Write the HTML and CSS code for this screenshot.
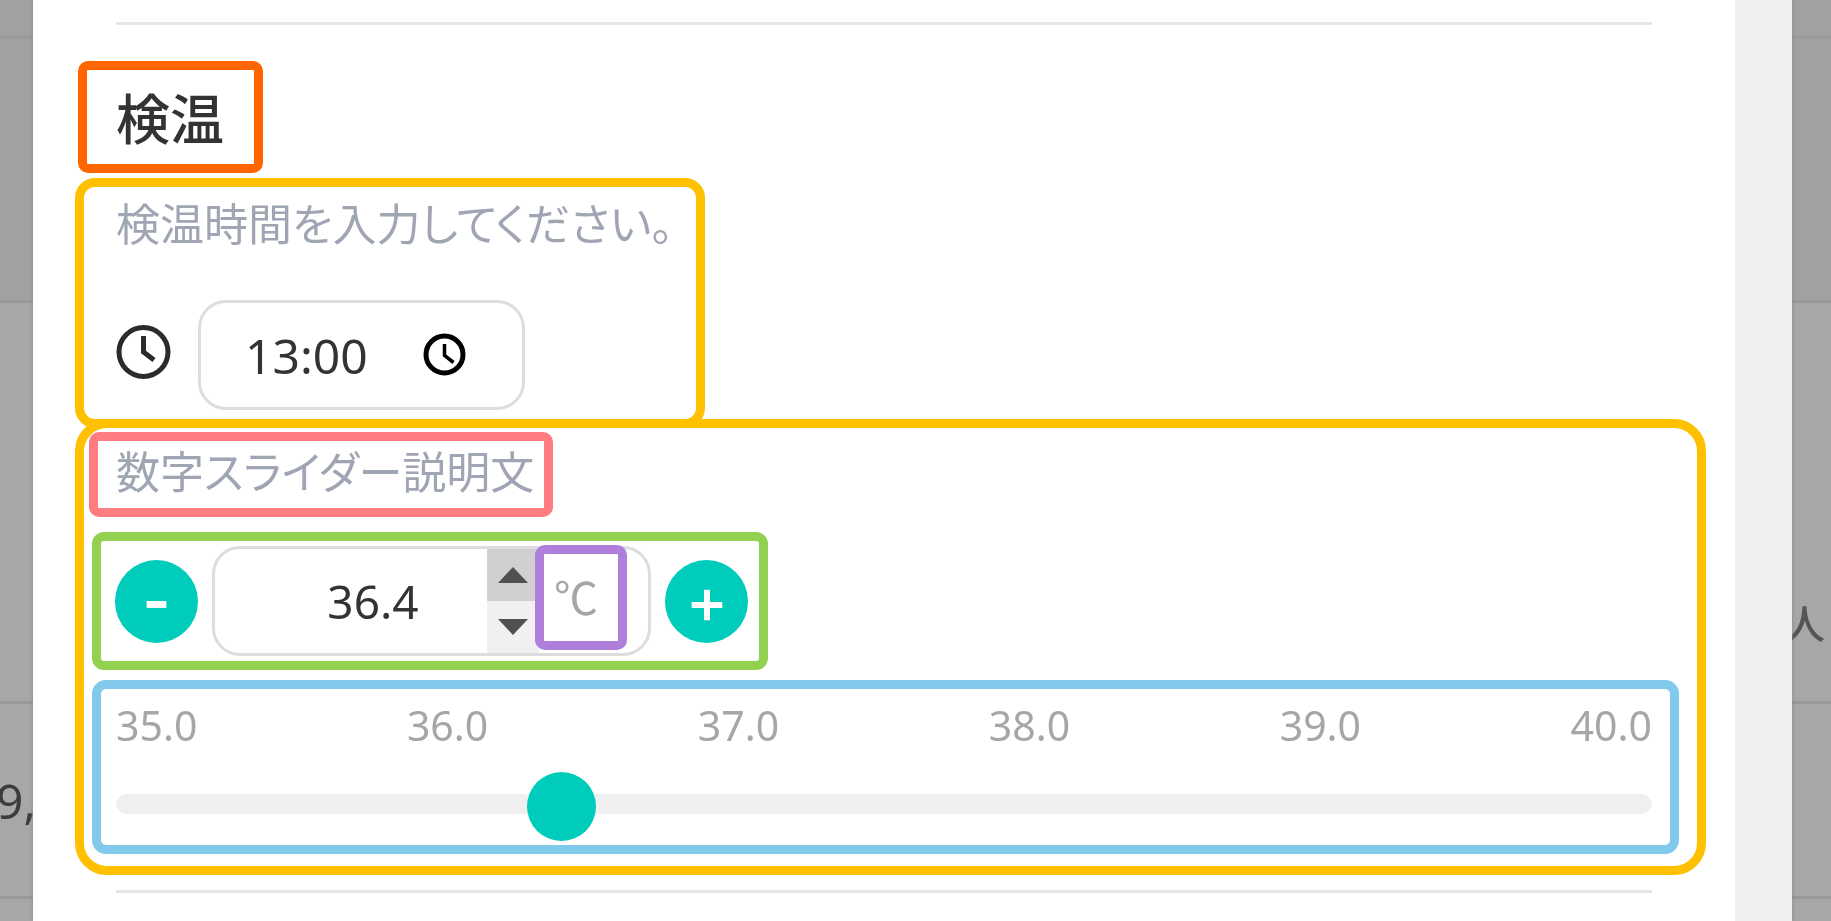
FILE: index.html
```html
<!DOCTYPE html>
<html lang="ja">
<head>
<meta charset="utf-8">
<title>検温</title>
<meta name="viewport" content="width=device-width, initial-scale=1">
<link rel="stylesheet" href="styles.css">
</head>
<body>
<div class="backdrop" aria-hidden="true">
  <div class="row row-head"></div>
  <div class="row row-dark"></div>
  <div class="row row-tall"><span class="cell-end">人</span></div>
  <div class="row row-mid"><span class="cell-start">9,</span></div>
  <div class="row row-last"></div>
</div>
<main class="modal">
  <div class="modal-body">
    <hr class="divider">
    <h1 class="mark mark-title">検温</h1>
    <section class="mark mark-time">
      <label class="note" for="time">検温時間を入力してください。</label>
      <div class="time-row">
        <svg class="clock" viewBox="0 0 56 56" aria-hidden="true"><circle cx="27.500" cy="28" r="24.500"/><path d="M27.500 12v16l10.500 8"/></svg>
        <div class="time-field">
          <input class="time-input" id="time" type="text" value="13:00">
          <button class="picker" type="button" aria-label="時刻を選択">
            <svg class="clock-small" viewBox="0 0 44 44" aria-hidden="true"><circle cx="21.500" cy="21.500" r="18.500"/><path d="M21.500 11v11.500l9 7" stroke-width="3.500"/></svg>
          </button>
        </div>
      </div>
    </section>
    <section class="mark mark-slider">
      <label class="note mark mark-note" for="temp">数字スライダー説明文</label>
      <div class="mark mark-stepper">
        <button class="round" type="button" aria-label="減らす"><svg viewBox="0 0 84 84" aria-hidden="true"><path d="M32 45h20" stroke-width="7"/></svg></button>
        <div class="number-field">
          <input class="number-input" id="temp" type="number" value="36.4" step="0.1" min="35" max="40">
          <div class="spin">
            <button class="spin-up" type="button" aria-label="上げる"><svg viewBox="0 0 30 16" aria-hidden="true"><path d="M15 0 30 16H0z"/></svg></button>
            <button class="spin-down" type="button" aria-label="下げる"><svg viewBox="0 0 30 16" aria-hidden="true"><path d="M15 16 30 0H0z"/></svg></button>
          </div>
          <span class="mark mark-unit">℃</span>
        </div>
        <button class="round" type="button" aria-label="増やす"><svg viewBox="0 0 84 84" aria-hidden="true"><path d="M27 45.500h31M42.500 30v31" stroke-width="6"/></svg></button>
      </div>
      <div class="mark mark-range">
        <div class="scale"><span>35.0</span><span>36.0</span><span>37.0</span><span>38.0</span><span>39.0</span><span>40.0</span></div>
        <input class="range" type="range" min="35" max="40" step="0.1" value="36.4" aria-label="体温">
      </div>
    </section>
    <hr class="divider divider-end">
  </div>
  <div class="scrollbar"></div>
</main>
</body>
</html>
```
FILE: styles.css
```css
* { box-sizing: border-box; }

body {
  margin: 0;
  min-height: 100vh;
  overflow: hidden;
  background: #a7a7a7;
  color: #333;
  font-family: "Noto Sans", "Noto Sans CJK JP", sans-serif;
}

button, input { font: inherit; color: inherit; margin: 0; padding: 0; border: 0; background: none; }
button { cursor: pointer; }

/* Page behind the dialog */
.backdrop { position: fixed; inset: 0; overflow: hidden; color: #555; font-size: 40px; }
.row { display: flex; align-items: center; justify-content: space-between; border-bottom: 3px solid #999; }
.row-head { height: 39px; background: #a1a1a1; }
.row-dark { height: 264px; background: #a1a1a1; }
.row-tall { height: 401px; padding-top: 240px; }
.row-mid { height: 195px; }
.row-last { border: 0; }
.cell-end { margin-left: auto; padding-right: 6px; font-weight: 500; }
.cell-start { font-size: 48px; color: #3c3c3c; margin-left: -4px; }

/* Dialog */
.modal {
  position: relative;
  display: flex;
  min-height: 100vh;
  margin: 0 39px 0 33px;
  background: #fff;
  box-shadow: 0 0 4px #888;
}
.modal-body { flex: 1; min-width: 0; display: flex; flex-direction: column; align-items: flex-start; }
.scrollbar { width: 57px; background: #f0f0f0; }

.divider { align-self: stretch; height: 3px; margin: 22px 83px 0; border: 0; background: #e6e6e6; }
.divider-end { margin-top: 15px; }

/* Coloured outlines */
.mark { border: 9px solid; }
.mark-title {
  margin: 36px 0 0 45px;
  padding: 0 30px 0 29px;
  border-color: #ff6600;
  border-radius: 10px;
  font-size: 54px;
  font-weight: 500;
  line-height: 94px;
  font-family: "Noto Sans CJK JP", sans-serif;
}
.mark-time {
  margin: 5px 0 0 42px;
  padding: 0 23px 9px 32px;
  border-color: #ffc000;
  border-radius: 20px;
}
.mark-slider {
  align-self: stretch;
  display: flex;
  flex-direction: column;
  align-items: flex-start;
  margin: -9px 29px 0 42px;
  padding: 4px 0 12px;
  border-color: #ffc000;
  border-radius: 32px;
}
.mark-stepper {
  display: flex;
  align-items: center;
  gap: 14px;
  margin: 15px 0 0 8px;
  padding: 5px 11px 5px 14px;
  border-color: #92d050;
  border-radius: 12px;
}
.mark-unit {
  position: relative;
  width: 92px;
  height: 105px;
  margin: -4px 0 0 -4px;
  padding-right: 10px;
  border-color: #b07fdb;
  border-radius: 10px;
  color: #a6a6a6;
  font: 44px/84px "Noto Sans CJK JP", sans-serif;
  text-align: center;
}
.mark-range {
  align-self: stretch;
  margin: 10px 18px 0 8px;
  padding: 0 18px 3px 15px;
  border-color: #82caeb;
  border-radius: 14px;
}

.note {
  display: block;
  color: #a0a5b4;
  font-family: "Noto Sans CJK JP", sans-serif;
  font-size: 44px;
  font-weight: 400;
  font-feature-settings: "palt";
  line-height: 70px;
  white-space: nowrap;
}
.mark-note {
  margin-left: 5px;
  padding: 0 10px 9px 18px;
  border-color: #ff7c80;
  border-radius: 10px;
  line-height: 58px;
}

/* Time */
.time-row { display: flex; align-items: center; gap: 26px; margin-top: 43px; }
.clock { width: 56px; height: 56px; margin-bottom: 6px; fill: none; stroke: #2b2b2b; stroke-width: 5; }
.clock-small { display: block; width: 44px; height: 44px; fill: none; stroke: #000; stroke-width: 5; }
.time-field, .number-field { display: flex; height: 110px; border: 3px solid #ddd; border-radius: 28px; background: #fff; }
.time-field { align-items: center; width: 327px; padding-left: 44px; }
.time-input { width: 178px; height: 100%; font-size: 48px; }

/* Stepper */
.round { width: 83px; height: 83px; border-radius: 50%; background: #00ccbb; }
.round svg { display: block; width: 100%; fill: none; stroke: #fff; }
.number-field { align-items: flex-start; width: 439px; }
.number-input {
  width: 272px;
  height: 100%;
  padding-left: 44px;
  font-size: 46px;
  text-align: center;
  appearance: textfield;
}
.number-input::-webkit-inner-spin-button { appearance: none; margin: 0; }
.spin { display: flex; flex-direction: column; width: 52px; height: 100%; background: #f0f0f0; }
.spin button { flex: 1; display: flex; align-items: center; justify-content: center; }
.spin svg { width: 30px; height: 16px; fill: #505050; }
.spin-up { background: #d0d0d0; }

/* Slider */
.scale { display: flex; justify-content: space-between; color: #a6a6a6; font-size: 41px; line-height: 72px; }
.range { display: block; width: 100%; height: 70px; margin-top: 11px; appearance: none; }
.range::-webkit-slider-runnable-track { height: 20px; margin-bottom: 6px; border-radius: 10px; background: #f0f0f0; }
.range::-webkit-slider-thumb { width: 69px; height: 69px; margin-top: -22px; appearance: none; border-radius: 50%; background: #00ccbb; }
```
